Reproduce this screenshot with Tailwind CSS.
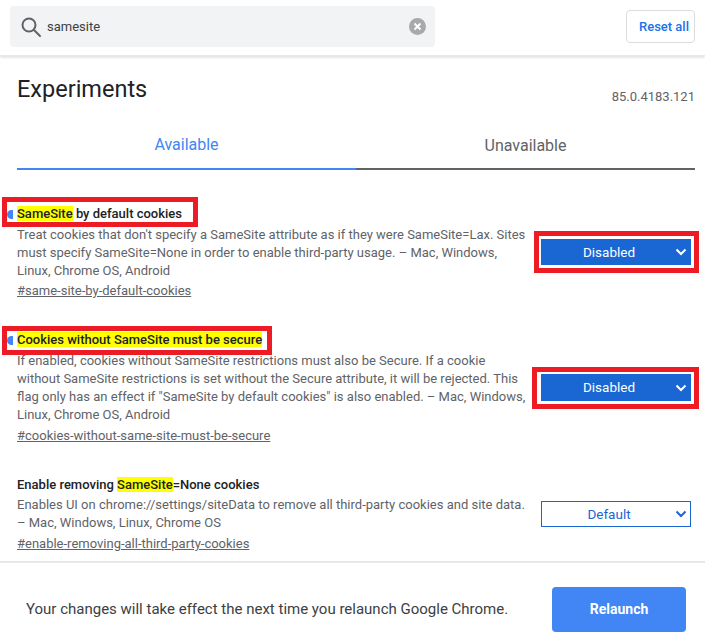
<!DOCTYPE html>
<html lang="en">
<head>
    <meta charset="UTF-8">
    <title>Experiments</title>
    <script src="https://cdn.jsdelivr.net/npm/@tailwindcss/browser@4"></script>
</head>
<body class="bg-white font-['Roboto',sans-serif] w-[705px] h-[637px] overflow-hidden relative">

    <!-- Search header -->
    <header class="h-[56px] flex items-start justify-between pl-[10px] pr-[10px] shadow-[0_2px_2px_rgba(0,0,0,0.1)] border-b border-[#e8e8e8]">
        <div class="mt-[6px] w-[425px] h-[41px] bg-[#f1f3f4] rounded flex items-center pl-[10px] pr-[9px]">
            <svg class="w-[22px] h-[22px] text-[#5f6368]" viewBox="0 0 22 22" fill="none" stroke="currentColor" stroke-width="2"><circle cx="9" cy="9" r="6.5"/><path d="M14 14l6 6" stroke-linecap="round"/></svg>
            <span class="ml-[5px] text-[13px] text-[#3c4043] flex-1">samesite</span>
            <svg class="w-[17px] h-[17px]" viewBox="0 0 17 17"><circle cx="8.5" cy="8.5" r="8.5" fill="#a8a9ab"/><path d="M5.5 5.5l6 6M11.5 5.5l-6 6" stroke="#fff" stroke-width="2"/></svg>
        </div>
        <button class="mt-[10px] w-[69px] h-[33px] pl-[7px] border border-[#dadce0] rounded text-[13px] font-medium text-[#1a73e8]">Reset all</button>
    </header>

    <main class="pl-[17px] pr-[10px]">
        <div class="flex justify-between items-end h-[54px]">
            <h1 class="text-[23.500px] leading-[30px] text-[#202124] mb-[6px]">Experiments</h1>
            <span class="text-[13px] text-[#5f6368] leading-[16px] mb-[5px]">85.0.4183.121</span>
        </div>

        <!-- Tabs -->
        <div class="flex mt-[18px] h-[42px]">
            <div class="w-[339px] border-b-2 border-[#4285f4] text-center text-[16px] text-[#4285f4] leading-[34px]">Available</div>
            <div class="w-[339px] border-b-2 border-[#5f6368] text-center text-[16px] text-[#5f6368] leading-[36px]">Unavailable</div>
        </div>

        <!-- Experiment rows -->
        <section class="mt-[35px] flex justify-between">
            <div class="w-[512px]">
                <h2 class="text-[13px] leading-[18px] font-medium text-[#202124]"><mark class="bg-[#ffff00] text-[#202124]">SameSite</mark> by default cookies</h2>
                <p class="mt-[3px] text-[13px] leading-[18px] text-[#5f6368]">Treat cookies that don't specify a SameSite attribute as if they were SameSite=Lax. Sites must specify SameSite=None in order to enable third-party usage. – Mac, Windows, Linux, Chrome OS, Android</p>
                <a class="block mt-[2px] text-[13px] leading-[18px] text-[#5f6368] underline">#same-site-by-default-cookies</a>
            </div>
            <div class="mt-[34px] mr-[4px] w-[150px] h-[26px] bg-[#1a66d2] text-white text-[13.500px] flex items-center relative justify-center pr-[14px]">
                Disabled
                <svg class="absolute right-[4px] top-[9px] w-[12px] h-[8px]" viewBox="0 0 12 8" fill="none" stroke="#fff" stroke-width="2"><path d="M1.500 1.500L6 6l4.500-4.500"/></svg>
            </div>
        </section>

        <section class="mt-[31px] flex justify-between">
            <div class="w-[512px]">
                <h2 class="text-[13px] leading-[18px] font-medium text-[#202124]"><mark class="bg-[#ffff00] text-[#202124]">Cookies without SameSite must be secure</mark></h2>
                <p class="mt-[3px] text-[13px] leading-[18px] text-[#5f6368]">If enabled, cookies without SameSite restrictions must also be Secure. If a cookie without SameSite restrictions is set without the Secure attribute, it will be rejected. This flag only has an effect if "SameSite by default cookies" is also enabled. – Mac, Windows, Linux, Chrome OS, Android</p>
                <a class="block mt-[3px] text-[13px] leading-[18px] text-[#5f6368] underline">#cookies-without-same-site-must-be-secure</a>
            </div>
            <div class="mt-[43px] mr-[4px] w-[150px] h-[27px] bg-[#1a66d2] text-white text-[13.500px] flex items-center relative justify-center pr-[14px]">
                Disabled
                <svg class="absolute right-[4px] top-[10px] w-[12px] h-[8px]" viewBox="0 0 12 8" fill="none" stroke="#fff" stroke-width="2"><path d="M1.500 1.500L6 6l4.500-4.500"/></svg>
            </div>
        </section>

        <section class="mt-[31px] flex justify-between">
            <div class="w-[512px]">
                <h2 class="text-[13px] leading-[18px] font-medium text-[#202124]">Enable removing <mark class="bg-[#ffff00] text-[#202124]">SameSite</mark>=None cookies</h2>
                <p class="mt-[2px] text-[13px] leading-[18px] text-[#5f6368]">Enables UI on chrome://settings/siteData to remove all third-party cookies and site data. – Mac, Windows, Linux, Chrome OS</p>
                <a class="block mt-[3px] text-[13px] leading-[18px] text-[#5f6368] underline">#enable-removing-all-third-party-cookies</a>
            </div>
            <div class="mt-[25px] mr-[4px] w-[150px] h-[26px] border border-[#1a66d2] text-[#1a66d2] text-[13.500px] flex items-center relative justify-center pr-[14px]">
                Default
                <svg class="absolute right-[3px] top-[8px] w-[12px] h-[8px]" viewBox="0 0 12 8" fill="none" stroke="#1a66d2" stroke-width="2"><path d="M1.500 1.500L6 6l4.500-4.500"/></svg>
            </div>
        </section>
    </main>

    <!-- Relaunch footer -->
    <footer class="absolute left-0 top-[561px] w-[705px] h-[76px] bg-white border-t-2 border-[#e8e8e8] flex items-start justify-between pl-[26px] pr-[19px]">
        <span class="mt-[37px] text-[15px] leading-[18px] text-[#3c4043]">Your changes will take effect the next time you relaunch Google Chrome.</span>
        <button class="mt-[24px] w-[134px] h-[45px] bg-[#4285f4] rounded text-[14px] font-bold text-white">Relaunch</button>
    </footer>

    <!-- Blue markers -->
    <span class="absolute left-[7px] top-[210px] w-[6px] h-[9px] bg-[#4285f4] rounded-l-[5px]"></span>
    <span class="absolute left-[7px] top-[336px] w-[6px] h-[9px] bg-[#4285f4] rounded-l-[5px]"></span>

    <!-- Red annotation boxes -->
    <div class="absolute left-[2px] top-[197px] w-[196px] h-[30px] border-[5px] border-[#ed1c24]"></div>
    <div class="absolute left-[2px] top-[326px] w-[270px] h-[29px] border-[5px] border-[#ed1c24]"></div>
    <div class="absolute left-[534px] top-[231px] w-[165px] h-[42px] border-[5px] border-[#ed1c24]"></div>
    <div class="absolute left-[532px] top-[367px] w-[167px] h-[42px] border-[5px] border-[#ed1c24]"></div>
</body>
</html>
